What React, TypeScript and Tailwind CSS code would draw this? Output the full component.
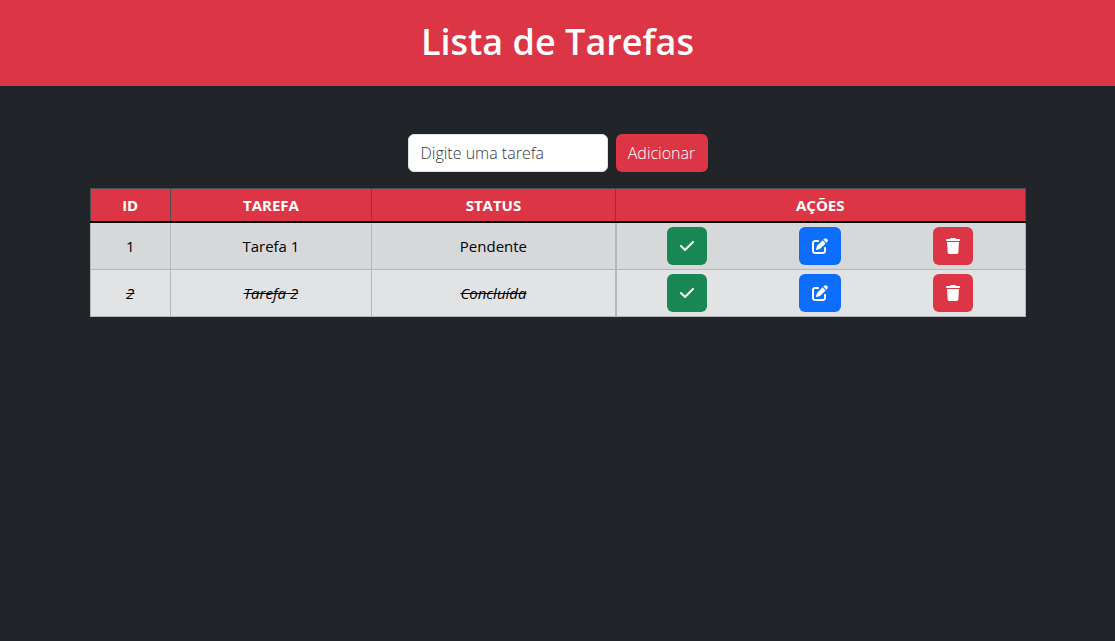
import { useState } from 'react';
import type { FormEvent } from 'react';
import { FaCheck, FaPenToSquare, FaTrash } from 'react-icons/fa6';

type Task = { id: number; name: string; done: boolean };

const initialTasks: Task[] = [
  { id: 1, name: 'Tarefa 1', done: false },
  { id: 2, name: 'Tarefa 2', done: true },
];

const headCell = 'border border-[#4d5154] border-b-2 border-b-black p-1 font-bold';
const bodyCell = 'border border-[#b4b6b8] p-1';
const actionButton = 'flex h-[38px] items-center justify-center rounded-md text-white';

export default function App() {
  const [tasks, setTasks] = useState<Task[]>(initialTasks);
  const [draft, setDraft] = useState('');

  const addTask = (event: FormEvent) => {
    event.preventDefault();
    const name = draft.trim();
    if (!name) return;
    setTasks([...tasks, { id: Math.max(0, ...tasks.map((t) => t.id)) + 1, name, done: false }]);
    setDraft('');
  };

  const toggleTask = (id: number) =>
    setTasks(tasks.map((t) => (t.id === id ? { ...t, done: !t.done } : t)));

  const editTask = (task: Task) => {
    const name = window.prompt('Editar tarefa', task.name);
    if (name) setTasks(tasks.map((t) => (t.id === task.id ? { ...t, name } : t)));
  };

  const removeTask = (id: number) => setTasks(tasks.filter((t) => t.id !== id));

  return (
    <div className="min-h-screen bg-[#212529] font-['Open_Sans','Noto_Sans',sans-serif] text-[15px] leading-6">
      <header className="bg-[#dc3545] pt-[18px] pb-5 text-center text-white">
        <h1 className="text-[36px] leading-[48px] font-semibold">Lista de Tarefas</h1>
      </header>

      <main className="mx-auto max-w-[960px] px-3 pt-12">
        <form onSubmit={addTask} className="mb-4 flex justify-center gap-2">
          <input
            type="text"
            aria-label="Digite uma tarefa"
            placeholder="Digite uma tarefa"
            value={draft}
            onChange={(event) => setDraft(event.target.value)}
            className="h-[38px] w-[200px] rounded-md border border-[#dee2e6] bg-white px-3 text-base font-light text-[#212529] placeholder:text-[#33373b]"
          />
          <button
            type="submit"
            className="h-[38px] w-[92px] rounded-md bg-[#dc3545] text-center text-base font-light text-white"
          >
            Adicionar
          </button>
        </form>

        <table className="w-full table-fixed border-collapse text-center text-black">
          <colgroup>
            <col className="w-[8.6%]" />
            <col className="w-[21.5%]" />
            <col className="w-[26.1%]" />
            <col />
          </colgroup>
          <thead className="bg-[#dc3545] text-white">
            <tr>
              <th className={headCell}>ID</th>
              <th className={headCell}>TAREFA</th>
              <th className={headCell}>STATUS</th>
              <th className={headCell}>AÇÕES</th>
            </tr>
          </thead>
          <tbody>
            {tasks.map((task) => (
              <tr
                key={task.id}
                className={`odd:bg-[#d7d8da] even:bg-[#e2e3e5] ${task.done ? 'italic line-through' : ''}`}
              >
                <td className={bodyCell}>{task.id}</td>
                <td className={bodyCell}>{task.name}</td>
                <td className={bodyCell}>{task.done ? 'Concluída' : 'Pendente'}</td>
                <td className="border border-[#b4b6b8] p-0">
                  <div className="flex justify-around border-l border-[#b4b6b8] py-1 pr-[5px] pl-1">
                    <button
                      type="button"
                      aria-label="Concluir tarefa"
                      onClick={() => toggleTask(task.id)}
                      className={`${actionButton} w-10 bg-[#198754]`}
                    >
                      <FaCheck className="h-4 w-[14px]" />
                    </button>
                    <button
                      type="button"
                      aria-label="Editar tarefa"
                      onClick={() => editTask(task)}
                      className={`${actionButton} w-[42px] bg-[#0d6efd]`}
                    >
                      <FaPenToSquare className="size-4" />
                    </button>
                    <button
                      type="button"
                      aria-label="Excluir tarefa"
                      onClick={() => removeTask(task.id)}
                      className={`${actionButton} w-10 bg-[#dc3545]`}
                    >
                      <FaTrash className="h-4 w-[14px]" />
                    </button>
                  </div>
                </td>
              </tr>
            ))}
          </tbody>
        </table>
      </main>
    </div>
  );
}
